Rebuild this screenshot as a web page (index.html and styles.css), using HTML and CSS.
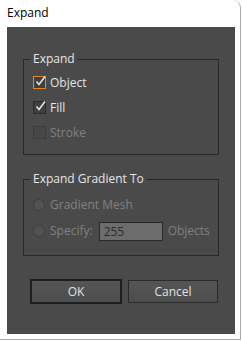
FILE: index.html
```html
<!DOCTYPE html>
<html>
<head>
  <title>Expand</title>
  <link rel="stylesheet" href="styles.css">
</head>
<body>
  <div class="window">
    <div class="title">Expand</div>
    <div class="panel">
      <fieldset class="group">
        <legend>Expand</legend>
        <div class="row">
          <span class="check focus"><svg width="11" height="11" viewBox="0 0 11 11"><path d="M1.5 5.5 L4 8.5 L10 0.5" fill="none" stroke="#e2e2e2" stroke-width="1.6"/></svg></span>
          <span class="label">Object</span>
        </div>
        <div class="row">
          <span class="check"><svg width="11" height="11" viewBox="0 0 11 11"><path d="M1.5 5.5 L4 8.5 L10 0.5" fill="none" stroke="#e2e2e2" stroke-width="1.6"/></svg></span>
          <span class="label">Fill</span>
        </div>
        <div class="row off">
          <span class="check"></span>
          <span class="label">Stroke</span>
        </div>
      </fieldset>

      <fieldset class="group second">
        <legend>Expand Gradient To</legend>
        <div class="row off">
          <span class="radio"></span>
          <span class="label">Gradient Mesh</span>
        </div>
        <div class="row off tall">
          <span class="radio"></span>
          <span class="label">Specify:</span>
          <span class="field">255</span>
          <span class="label">Objects</span>
        </div>
      </fieldset>

      <div class="buttons">
        <div class="btn ok">OK</div>
        <div class="btn">Cancel</div>
      </div>
    </div>
  </div>
</body>
</html>
```

FILE: styles.css
```css
body {
    margin: 0;
    background: #ffffff;
    font-family: "Open Sans", "Noto Sans", sans-serif;
    font-size: 12px;
}
.window {
    width: 240px;
    height: 339px;
    border-right: 1px solid #a9a9a9;
    border-bottom: 1px solid #a9a9a9;
    border-top-right-radius: 8px;
    background: #ffffff;
}
.title {
    height: 27px;
    line-height: 26px;
    padding-left: 7px;
    color: #000000;
}
.panel {
    margin-left: 7px;
    width: 228px;
    height: 307px;
    box-sizing: border-box;
    background: #4a4a4a;
    padding: 24px 16px 0 16px;
    color: #e4e4e4;
}
.group {
    margin: 0;
    width: 196px;
    box-sizing: border-box;
    border: 1px solid #282828;
    padding: 3px 0 9px 9px;
}
.group legend {
    padding: 0 3px;
    margin-left: -3px;
    line-height: 16px;
    color: #e6e6e6;
}
.second {
    margin-top: 16px;
    padding-top: 5px;
    padding-bottom: 10px;
}
.row {
    height: 25px;
    display: flex;
    align-items: center;
}
.row.tall {
    height: 28px;
}
.check {
    width: 11px;
    height: 11px;
    border: 1px solid #2c2c2c;
    background: #3f3f3f;
    display: flex;
    align-items: center;
    justify-content: center;
    margin-right: 4px;
}
.check.focus {
    border-color: #e8862a;
}
.check svg {
    margin-top: -2px;
    margin-right: -2px;
}
.off .check {
    border-color: #3c3c3c;
    background: #474747;
}
.radio {
    width: 10px;
    height: 10px;
    border-radius: 50%;
    border: 1px solid #3e3e3e;
    background: #525252;
    margin-right: 5px;
}
.label {
    line-height: 16px;
}
.off .label {
    color: #808080;
}
.field {
    width: 62px;
    height: 17px;
    margin: 0 5px 0 6px;
    border: 1px solid #2a2a2a;
    background: #6c6c6c;
    color: #2e2e2e;
    line-height: 17px;
    padding-left: 4px;
    box-sizing: content-box;
    width: 58px;
}
.buttons {
    margin-top: 23px;
    margin-left: 7px;
    display: flex;
    gap: 6px;
    align-items: flex-start;
}
.btn {
    width: 88px;
    height: 21px;
    line-height: 21px;
    text-align: center;
    border: 1px solid #2a2a2a;
    background: linear-gradient(#545454, #4e4e4e);
    color: #e2e2e2;
    margin-top: 1px;
}
.btn.ok {
    border: 2px solid #1e1e1e;
    margin-top: 0;
}
```
